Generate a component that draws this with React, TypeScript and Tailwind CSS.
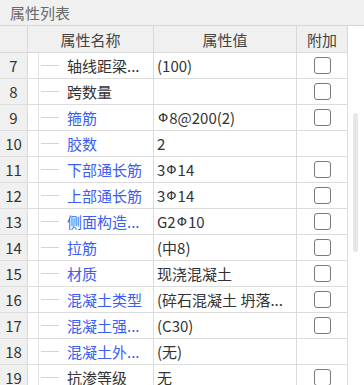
import React from "react";

type Row = { n: number; name: string; blue: boolean; value: React.ReactNode; cb: boolean };

const Bar = () => (
  <span className="inline-block text-[13px] leading-none align-[2px] mx-[1px] font-['DejaVu_Sans',sans-serif]">Φ</span>
);

const rows: Row[] = [
  { n: 7, name: "轴线距梁...", blue: false, value: "(100)", cb: true },
  { n: 8, name: "跨数量", blue: false, value: "", cb: true },
  { n: 9, name: "箍筋", blue: true, value: <><Bar />8@200(2)</>, cb: true },
  { n: 10, name: "胶数", blue: true, value: "2", cb: false },
  { n: 11, name: "下部通长筋", blue: true, value: <>3<Bar />14</>, cb: true },
  { n: 12, name: "上部通长筋", blue: true, value: <>3<Bar />14</>, cb: true },
  { n: 13, name: "侧面构造...", blue: true, value: <>G2<Bar />10</>, cb: true },
  { n: 14, name: "拉筋", blue: true, value: "(中8)", cb: true },
  { n: 15, name: "材质", blue: true, value: "现浇混凝土", cb: true },
  { n: 16, name: "混凝土类型", blue: true, value: "(碎石混凝土 坍落...", cb: true },
  { n: 17, name: "混凝土强...", blue: true, value: "(C30)", cb: true },
  { n: 18, name: "混凝土外...", blue: true, value: "(无)", cb: false },
  { n: 19, name: "抗渗等级", blue: false, value: "无", cb: true },
];

export default function App() {
  return (
    <div className="w-[364px] h-[385px] overflow-hidden bg-white font-['Noto_Sans_CJK_SC','Noto_Sans',sans-serif] text-[15px] text-[#333]">
      <div className="h-[26px] bg-[#f0f0f0] border-b border-[#d6d6d6] pl-[10px] flex items-center text-[#6a6a6a] leading-none">
        属性列表
      </div>
      <div className="flex">
        <div className="w-[348px] shrink-0">
          <div className="flex h-[27px] bg-[#f0f0f0] border-b border-[#d9d9d9] text-[#444] leading-none">
            <div className="w-[28px] border-r border-[#d9d9d9]" />
            <div className="w-[126px] border-r border-[#d9d9d9] flex items-center justify-center">属性名称</div>
            <div className="w-[143px] border-r border-[#d9d9d9] flex items-center justify-center">属性值</div>
            <div className="w-[51px] border-r border-[#d9d9d9] flex items-center justify-center">附加</div>
          </div>
          {rows.map((r) => (
            <div key={r.n} className="flex h-[26px] border-b border-[#dcdcdc] leading-none">
              <div className="w-[28px] bg-[#f0f0f0] border-r border-[#d9d9d9] flex items-center justify-center text-[#333]">
                {r.n}
              </div>
              <div className="w-[126px] border-r border-[#dcdcdc] flex">
                <div className="w-[11px] border-r border-[#e4e4e4]" />
                <div className="flex items-center">
                  <div className="ml-[2px] w-[18px] h-px bg-[#d4d4d4]" />
                  <span className={"ml-[8px] whitespace-nowrap " + (r.blue ? "text-[#3c5cf2]" : "text-[#333]")}>{r.name}</span>
                </div>
              </div>
              <div className="w-[143px] border-r border-[#dcdcdc] flex items-center pl-[3px] whitespace-nowrap overflow-hidden text-[#333]">
                {r.value}
              </div>
              <div className="w-[51px] border-r border-[#dcdcdc] flex items-center justify-center">
                {r.cb && <div className="w-[17px] h-[17px] border border-[#7a7a7a] rounded-[3px] bg-white ml-[1px]" />}
              </div>
            </div>
          ))}
        </div>
        <div className="flex-1 flex justify-center">
          <div className="mt-[87px] w-[5px] h-[139px] rounded-full bg-[#e6e6e6] ml-[-1px]" />
        </div>
      </div>
    </div>
  );
}
